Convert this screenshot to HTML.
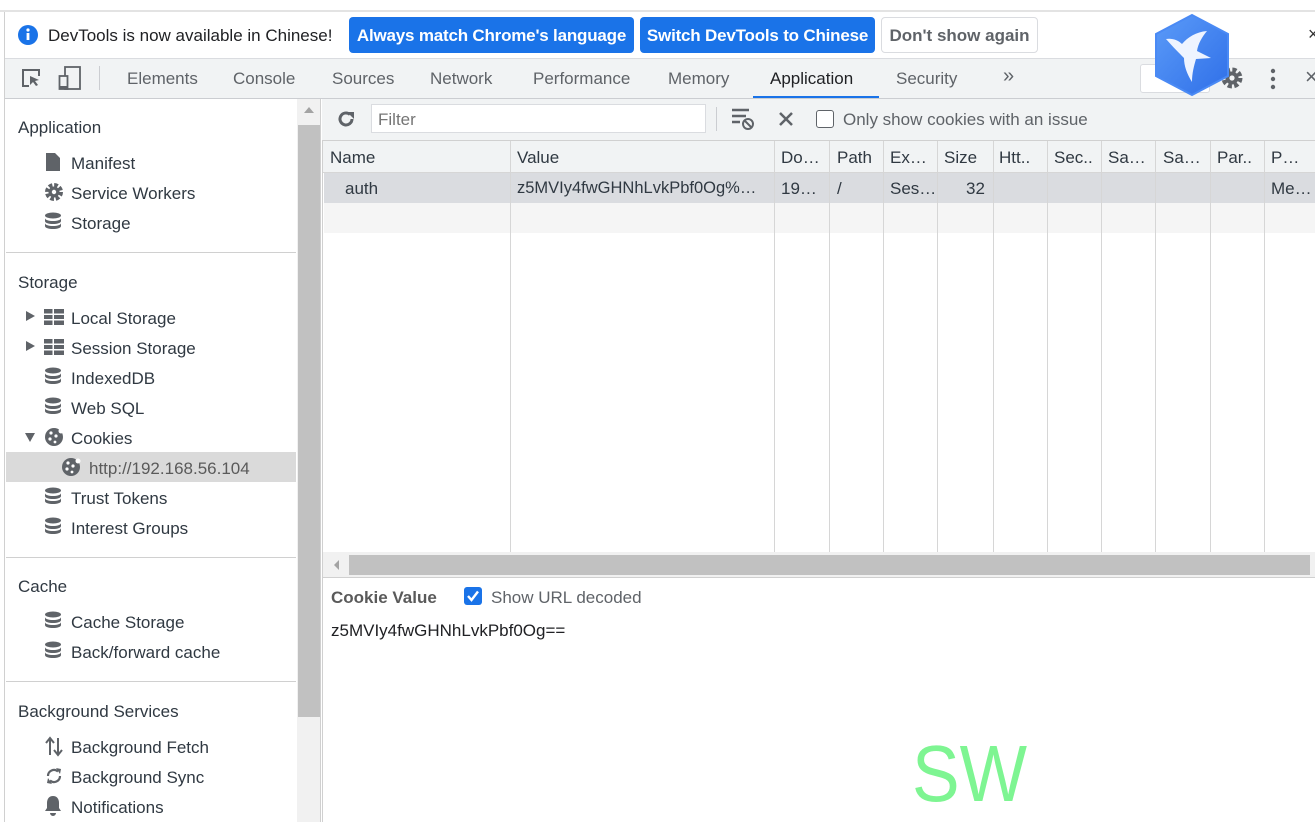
<!DOCTYPE html>
<html><head><meta charset="utf-8"><style>
*{box-sizing:border-box;margin:0;padding:0}
body{width:1315px;height:822px;overflow:hidden;background:#fff;font-family:"Liberation Sans",Arial,sans-serif;color:#303942;position:relative;font-size:16px}
.a{position:absolute;white-space:nowrap}
.btn{position:absolute;top:17px;height:36px;border-radius:4px;background:#1a73e8;color:#fff;font-weight:bold;font-size:16px;line-height:38px;text-align:center;letter-spacing:-0.2px}
.tab{position:absolute;top:69px;font-size:17px;color:#5f6368}
.si{position:absolute;left:71px;font-size:17px;color:#303942;margin-top:1px}
.sh{position:absolute;left:18px;font-size:17px;color:#303942;margin-top:1px}
.ic{position:absolute;left:44px}
.hline{position:absolute;left:6px;width:290px;height:1px;background:#d0d0d0}
.col{position:absolute;top:141px;width:1px;height:411px;background:#d6d6d6}
.th{position:absolute;top:148px;font-size:17px;color:#303942}
</style></head><body>
<div class="a" style="left:0;top:10px;width:1315px;height:2px;background:#e3e3e3"></div>
<div class="a" style="left:4px;top:12px;width:1px;height:810px;background:#d0d0d0"></div>
<!-- infobar -->
<svg class="a" style="left:17px;top:24px" width="22" height="22"><circle cx="11" cy="11" r="10" fill="#1a73e8"/><rect x="9.6" y="9" width="2.8" height="7" fill="#fff"/><circle cx="11" cy="6" r="1.6" fill="#fff"/></svg>
<div class="a" style="left:48px;top:26px;font-size:17px;color:#202124">DevTools is now available in Chinese!</div>
<div class="btn" style="left:349px;width:285px;font-size:17px">Always match Chrome's language</div>
<div class="btn" style="left:640px;width:235px;font-size:17px">Switch DevTools to Chinese</div>
<div class="a" style="left:881px;top:17px;width:157px;height:36px;border:1px solid #dadce0;border-radius:4px;font-size:17px;line-height:36px;text-align:center;color:#5f6368;font-weight:bold">Don't show again</div>
<div class="a" style="left:1308px;top:24px;font-size:18px;color:#333">×</div>
<!-- tabbar -->
<div class="a" style="left:5px;top:58px;width:1310px;height:41px;background:#f1f3f4;border-top:1px solid #dadce0;border-bottom:1px solid #cbcdd1"></div>
<svg class="a" style="left:20px;top:67px" width="22" height="22"><path d="M9 3H3v16h6" fill="none" stroke="#5f6368" stroke-width="2"/><path d="M3 3h16v6" fill="none" stroke="#5f6368" stroke-width="2"/><path d="M10 9l9 4-4 1 3 4-2 1-3-4-3 3z" fill="#5f6368"/></svg>
<svg class="a" style="left:58px;top:66px" width="24" height="24"><rect x="7" y="1" width="15" height="22" fill="none" stroke="#5f6368" stroke-width="1.8"/><rect x="1.5" y="10" width="8" height="13" fill="#f1f3f4" stroke="#5f6368" stroke-width="1.8"/><rect x="1.5" y="20" width="8" height="3" fill="#5f6368"/></svg>
<div class="a" style="left:99px;top:66px;width:1px;height:24px;background:#cbcdd1"></div>
<div class="tab" style="left:127px">Elements</div>
<div class="tab" style="left:233px">Console</div>
<div class="tab" style="left:332px">Sources</div>
<div class="tab" style="left:430px">Network</div>
<div class="tab" style="left:533px">Performance</div>
<div class="tab" style="left:668px">Memory</div>
<div class="tab" style="left:770px;color:#202124">Application</div>
<div class="a" style="left:753px;top:96px;width:126px;height:2px;background:#1a73e8"></div>
<div class="tab" style="left:896px">Security</div>
<div class="tab" style="left:1003px;font-size:20px;top:65px">»</div>
<div class="a" style="left:1140px;top:64px;width:70px;height:29px;border:1px solid #dadce0;border-radius:3px;background:#fff"></div>
<svg class="a" style="left:1219px;top:65px" width="26" height="26"><circle cx="13" cy="13" r="8" fill="none" stroke="#5f6368" stroke-width="5" stroke-dasharray="4 2.3"/><circle cx="13" cy="13" r="6.5" fill="#5f6368"/><circle cx="13" cy="13" r="2.6" fill="#f1f3f4"/></svg>
<svg class="a" style="left:1268px;top:68px" width="10" height="22"><circle cx="5" cy="3" r="2.2" fill="#5f6368"/><circle cx="5" cy="11" r="2.2" fill="#5f6368"/><circle cx="5" cy="19" r="2.2" fill="#5f6368"/></svg>
<div class="a" style="left:1305px;top:64px;font-size:22px;color:#5f6368">×</div>
<!-- bird logo -->
<svg class="a" style="left:1152px;top:13px" width="80" height="85" viewBox="0 0 80 85"><defs><linearGradient id="g" x1="0" y1="0" x2="1" y2="1"><stop offset="0" stop-color="#5b9bf8"/><stop offset="1" stop-color="#2f6fe8"/></linearGradient></defs><path d="M40 2L76 21v42L40 82 4 63V21z" fill="url(#g)" stroke="#4a8af5" stroke-width="2"/><path d="M14 26c6-1 12 1 16 5 6-7 14-12 25-13-5 6-9 13-10 20l14 7-15 1c-2 7-4 14-4 23-5-8-8-16-8-24-5-5-11-11-18-19z" fill="#eef4ff"/></svg>
<!-- sidebar -->
<div class="a" style="left:297px;top:99px;width:24px;height:723px;background:#f1f1f1;border-right:1px solid #d0d0d0"></div>
<div class="a" style="left:298px;top:125px;width:22px;height:592px;background:#c1c1c1"></div>
<svg class="a" style="left:303px;top:105px" width="12" height="10"><path d="M1 8L6 2l5 6z" fill="#a3a3a3"/></svg>
<div class="sh" style="top:117px">Application</div>
<svg class="ic" style="top:152px" width="18" height="20"><path d="M2 1h9l5 5v13H2z" fill="#5f6368"/></svg><div class="si" style="top:153px">Manifest</div>
<svg class="ic" style="top:182px" width="20" height="20"><circle cx="10" cy="10" r="6.5" fill="none" stroke="#5f6368" stroke-width="5" stroke-dasharray="3.4 1.7"/><circle cx="10" cy="10" r="5.5" fill="#5f6368"/><circle cx="10" cy="10" r="2.2" fill="#fff"/></svg><div class="si" style="top:183px">Service Workers</div>
<svg style="display:none"><symbol id="db" viewBox="0 0 18 20"><ellipse cx="9" cy="3.5" rx="8" ry="3" fill="#5f6368"/><path d="M1 6c0 2 4 3 8 3s8-1 8-3v3c0 2-4 3-8 3S1 11 1 9z" fill="#5f6368"/><path d="M1 11c0 2 4 3 8 3s8-1 8-3v3c0 2-4 3-8 3S1 16 1 14z" fill="#5f6368"/></symbol>
<symbol id="gr" viewBox="0 0 20 16"><rect x="0" y="0" width="20" height="16" fill="#5f6368"/><rect x="0" y="4.5" width="20" height="1.5" fill="#fff"/><rect x="0" y="10" width="20" height="1.5" fill="#fff"/><rect x="8.5" y="0" width="1.5" height="16" fill="#fff"/></symbol>
<symbol id="ck" viewBox="0 0 20 20"><circle cx="10" cy="10" r="9" fill="#5f6368"/><circle cx="7" cy="6" r="1.6" fill="#fff"/><circle cx="12" cy="9" r="1.6" fill="#fff"/><circle cx="6" cy="12" r="1.6" fill="#fff"/><circle cx="11" cy="15" r="1.4" fill="#fff"/><circle cx="17" cy="4" r="2.5" fill="#fff"/></symbol></svg>
<svg class="ic" style="top:212px" width="18" height="20"><use href="#db"/></svg><div class="si" style="top:213px">Storage</div>
<div class="hline" style="top:252px"></div>
<div class="sh" style="top:272px">Storage</div>
<div class="a" style="left:26px;top:311px;width:0;height:0;border-left:9px solid #5f6368;border-top:5.5px solid transparent;border-bottom:5.5px solid transparent"></div>
<svg class="ic" style="top:309px" width="20" height="16"><use href="#gr"/></svg><div class="si" style="top:308px">Local Storage</div>
<div class="a" style="left:26px;top:341px;width:0;height:0;border-left:9px solid #5f6368;border-top:5.5px solid transparent;border-bottom:5.5px solid transparent"></div>
<svg class="ic" style="top:339px" width="20" height="16"><use href="#gr"/></svg><div class="si" style="top:338px">Session Storage</div>
<svg class="ic" style="top:367px" width="18" height="20"><use href="#db"/></svg><div class="si" style="top:368px">IndexedDB</div>
<svg class="ic" style="top:397px" width="18" height="20"><use href="#db"/></svg><div class="si" style="top:398px">Web SQL</div>
<div class="a" style="left:25px;top:433px;width:0;height:0;border-top:9px solid #5f6368;border-left:5.5px solid transparent;border-right:5.5px solid transparent"></div>
<svg class="ic" style="top:427px" width="20" height="20"><use href="#ck"/></svg><div class="si" style="top:428px">Cookies</div>
<div class="a" style="left:6px;top:452px;width:290px;height:30px;background:#dadada"></div>
<svg class="a" style="left:61px;top:457px" width="20" height="20"><use href="#ck"/></svg><div class="si" style="left:89px;top:458px;color:#5a5a5a">http://192.168.56.104</div>
<svg class="ic" style="top:487px" width="18" height="20"><use href="#db"/></svg><div class="si" style="top:488px">Trust Tokens</div>
<svg class="ic" style="top:517px" width="18" height="20"><use href="#db"/></svg><div class="si" style="top:518px">Interest Groups</div>
<div class="hline" style="top:557px"></div>
<div class="sh" style="top:576px">Cache</div>
<svg class="ic" style="top:611px" width="18" height="20"><use href="#db"/></svg><div class="si" style="top:612px">Cache Storage</div>
<svg class="ic" style="top:641px" width="18" height="20"><use href="#db"/></svg><div class="si" style="top:642px">Back/forward cache</div>
<div class="hline" style="top:681px"></div>
<div class="sh" style="top:701px">Background Services</div>
<svg class="ic" style="top:735px" width="20" height="22"><path d="M6 20V4M2 8l4-5 4 5M14 3v16M10 15l4 5 4-5" fill="none" stroke="#5f6368" stroke-width="2"/></svg><div class="si" style="top:737px">Background Fetch</div>
<svg class="ic" style="top:766px" width="20" height="20"><path d="M4 10a6 6 0 0 1 10-4.5M16 10a6 6 0 0 1-10 4.5" fill="none" stroke="#5f6368" stroke-width="2.2"/><path d="M12 2l5 1-1 5zM8 18l-5-1 1-5z" fill="#5f6368"/></svg><div class="si" style="top:767px">Background Sync</div>
<svg class="ic" style="top:795px" width="18" height="22"><path d="M9 1c-4 0-6 3-6 7v5l-2 3h16l-2-3V8c0-4-2-7-6-7zM6 18a3 3 0 0 0 6 0z" fill="#5f6368"/></svg><div class="si" style="top:797px">Notifications</div>
<!-- main toolbar -->
<div class="a" style="left:322px;top:99px;width:993px;height:42px;background:#f1f3f4;border-bottom:1px solid #d0d0d0"></div>
<svg class="a" style="left:335px;top:108px" width="22" height="22"><path d="M17 11a6 6 0 1 1-2-4.5" fill="none" stroke="#5f6368" stroke-width="3"/><path d="M12 4h7v7z" fill="#5f6368"/></svg>
<div class="a" style="left:371px;top:104px;width:335px;height:29px;background:#fff;border:1px solid #dadce0"></div>
<div class="a" style="left:378px;top:110px;font-size:17px;color:#757575">Filter</div>
<div class="a" style="left:716px;top:107px;width:1px;height:24px;background:#cbcdd1"></div>
<svg class="a" style="left:731px;top:107px" width="26" height="24"><path d="M1 3h17M1 9h14M1 15h8" stroke="#5f6368" stroke-width="2.5"/><circle cx="17" cy="17" r="5" fill="none" stroke="#5f6368" stroke-width="2"/><path d="M13.5 13.5l7 7" stroke="#5f6368" stroke-width="2"/></svg>
<svg class="a" style="left:778px;top:111px" width="16" height="16"><path d="M2 2l12 12M14 2L2 14" stroke="#5f6368" stroke-width="2.5"/></svg>
<div class="a" style="left:816px;top:110px;width:18px;height:18px;border:1.5px solid #5f6368;border-radius:3px;background:#fff"></div>
<div class="a" style="left:843px;top:110px;font-size:17px;color:#5f6368">Only show cookies with an issue</div>
<!-- table -->
<div class="a" style="left:322px;top:141px;width:993px;height:32px;background:#f1f3f4;border-bottom:1px solid #d6d6d6"></div>
<div class="a" style="left:324px;top:173px;width:991px;height:30px;background:#dadce0"></div>
<div class="a" style="left:324px;top:203px;width:991px;height:30px;background:#f5f5f5"></div>
<div class="col" style="left:510px"></div><div class="col" style="left:774px"></div><div class="col" style="left:829px"></div><div class="col" style="left:883px"></div><div class="col" style="left:937px"></div><div class="col" style="left:993px"></div><div class="col" style="left:1047px"></div><div class="col" style="left:1101px"></div><div class="col" style="left:1155px"></div><div class="col" style="left:1210px"></div><div class="col" style="left:1264px"></div>
<div class="th" style="left:330px">Name</div><div class="th" style="left:517px">Value</div><div class="th" style="left:781px">Do…</div><div class="th" style="left:837px">Path</div><div class="th" style="left:890px">Ex…</div><div class="th" style="left:944px">Size</div><div class="th" style="left:999px">Htt..</div><div class="th" style="left:1054px">Sec..</div><div class="th" style="left:1108px">Sa…</div><div class="th" style="left:1163px">Sa…</div><div class="th" style="left:1217px">Par..</div><div class="th" style="left:1271px">P…</div>
<div class="th" style="top:179px;left:345px">auth</div><div class="th" style="top:179px;left:517px;font-size:16.5px">z5MVIy4fwGHNhLvkPbf0Og%…</div><div class="th" style="top:179px;left:781px">19…</div><div class="th" style="top:179px;left:837px">/</div><div class="th" style="top:179px;left:890px">Ses…</div><div class="th" style="top:179px;left:966px">32</div><div class="th" style="top:179px;left:1271px">Me…</div>
<div class="a" style="left:322px;top:141px;width:1px;height:681px;background:#d0d0d0"></div>
<!-- h scrollbar -->
<div class="a" style="left:323px;top:552px;width:992px;height:26px;background:#f1f1f1;border-bottom:1px solid #d0d0d0"></div>
<div class="a" style="left:349px;top:555px;width:961px;height:20px;background:#c1c1c1"></div>
<svg class="a" style="left:332px;top:559px" width="8" height="12"><path d="M7 1L2 6l5 5z" fill="#a3a3a3"/></svg>
<!-- cookie value -->
<div class="a" style="left:331px;top:588px;font-size:17px;font-weight:bold;color:#5a5a5a">Cookie Value</div>
<svg class="a" style="left:464px;top:587px" width="18" height="18"><rect width="18" height="18" rx="3" fill="#1a73e8"/><path d="M4 9l3.5 4L14 4.5" fill="none" stroke="#fff" stroke-width="2.4"/></svg>
<div class="a" style="left:491px;top:588px;font-size:17px;color:#5f6368">Show URL decoded</div>
<div class="a" style="left:331px;top:621px;font-size:17px;color:#202124">z5MVIy4fwGHNhLvkPbf0Og==</div>
<svg class="a" style="left:900px;top:725px" width="150" height="90"><text x="12" y="76" font-family="Liberation Sans, sans-serif" font-size="80" fill="#7ef592" textLength="115" lengthAdjust="spacingAndGlyphs">SW</text></svg>
</body></html>
